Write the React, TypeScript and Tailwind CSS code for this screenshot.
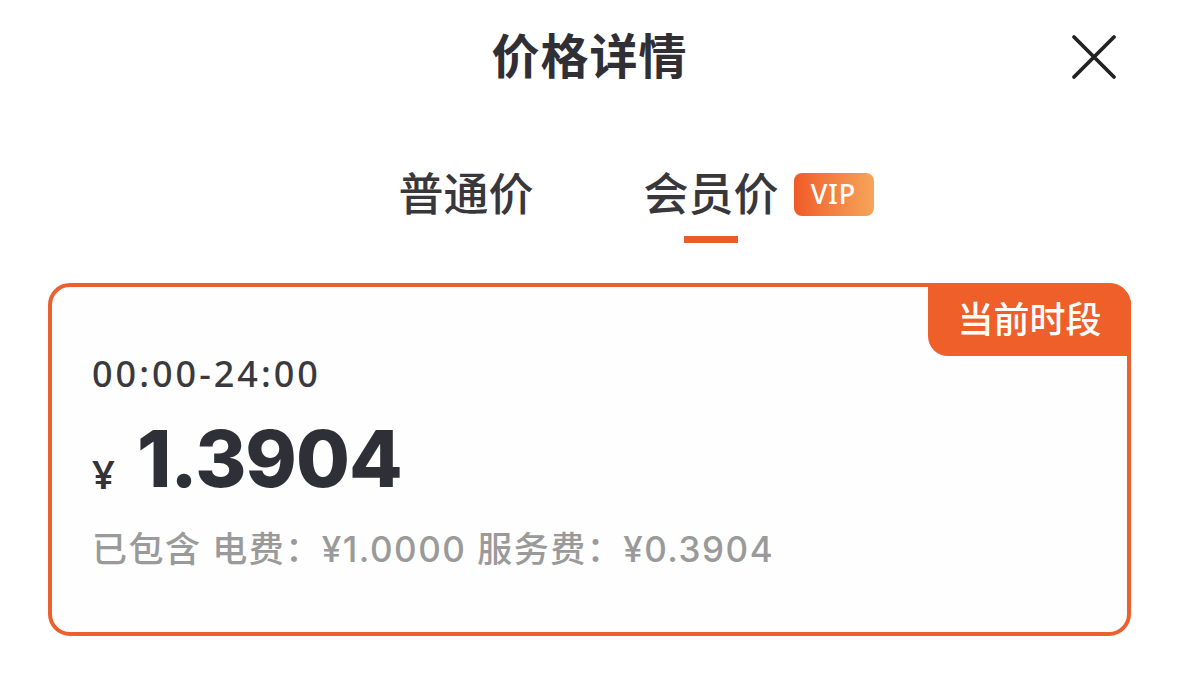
import React, { useState } from 'react';

const cjk = "font-['Inter','Noto_Sans_CJK_SC',sans-serif]";

export default function App() {
  const [tab, setTab] = useState<'normal' | 'vip'>('vip');

  return (
    <div className={`w-[1179px] h-[678px] bg-white overflow-hidden relative ${cjk}`}>
      {/* Header */}
      <div className="h-[116px] flex items-center justify-center relative">
        <h1 className="text-[48px] font-bold text-[#2f2f35] leading-none -mt-[2px] tracking-[1px]">价格详情</h1>
        <button className="absolute right-[60px] top-[32px] w-[50px] h-[50px] flex items-center justify-center">
          <svg width="46" height="46" viewBox="0 0 46 46" fill="none">
            <path d="M3 3L43 43M43 3L3 43" stroke="#222" strokeWidth="3.8" strokeLinecap="round" />
          </svg>
        </button>
      </div>

      {/* Tabs */}
      <div className="flex justify-center gap-[110px] pl-[93px] h-[136px] pt-[56px]">
        <button onClick={() => setTab('normal')} className="flex flex-col items-center">
          <span className="text-[45px] font-medium text-[#38383c] leading-none">普通价</span>
          {tab === 'normal' && <span className="mt-[23px] w-[54px] h-[6px] bg-[#ee5a2a]" />}
        </button>
        <button onClick={() => setTab('vip')} className="flex flex-col items-start">
          <span className="flex items-center">
            <span className="text-[45px] font-medium text-[#38383c] leading-none">会员价</span>
            <span className="ml-[15px] w-[80px] h-[43px] rounded-[8px] bg-gradient-to-r from-[#ef5a26] to-[#f6a45a] text-white text-[27px] font-medium flex items-center justify-center tracking-[1px] font-['Noto_Sans',sans-serif]">
              VIP
            </span>
          </span>
          {tab === 'vip' && <span className="ml-[40px] mt-[19px] w-[54px] h-[7px] bg-[#ee5a2a]" />}
        </button>
      </div>

      {/* Price card */}
      <div className="mx-[48px] mt-[31px] h-[353px] rounded-[22px] border-[4px] border-[#ec6030] bg-[#fefefe] relative">
        <div className="absolute -top-[4px] -right-[4px] w-[203px] h-[73px] bg-[#ee5f2a] rounded-tr-[22px] rounded-bl-[20px] flex items-center justify-center text-white text-[36px] font-medium">
          当前时段
        </div>
        <div className="pl-[40px] pt-[69px] flex flex-col">
          <div className="text-[36px] font-medium text-[#3a3a3e] leading-none tracking-[3px] font-['Noto_Sans',sans-serif]">
            00:00-24:00
          </div>
          <div className="flex items-end mt-[28px]">
            <span className="text-[40px] font-semibold text-[#333338] leading-none mb-[4px] font-['Noto_Sans',sans-serif]">¥</span>
            <span className="ml-[22px] text-[78px] font-extrabold text-[#2f2f37] leading-none tracking-[-1px]">1.3904</span>
          </div>
          <div className="mt-[34px] text-[35px] text-[#9a9a9a] font-medium leading-none whitespace-nowrap tracking-[1.5px]">
            已包含 电费：¥1.0000 服务费：¥0.3904
          </div>
        </div>
      </div>
    </div>
  );
}
